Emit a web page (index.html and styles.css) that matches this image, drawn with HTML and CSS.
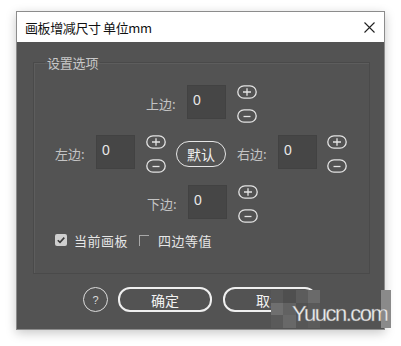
FILE: index.html
```html
<!DOCTYPE html>
<html lang="zh">
<head>
<meta charset="utf-8">
<link rel="stylesheet" href="styles.css">
</head>
<body>
<div class="window">
  <div class="titlebar">
    <span class="title">画板增减尺寸 单位mm</span>
    <svg class="close" width="11" height="11" viewBox="0 0 11 11"><path d="M0.5 0.5L10.5 10.5M10.5 0.5L0.5 10.5" stroke="#222" stroke-width="1.1" fill="none"/></svg>
  </div>
  <div class="content">
    <fieldset class="group">
      <legend class="legend">设置选项</legend>
      <div class="row row-top">
        <div class="cluster">
          <span class="lbl">上边:</span>
          <div class="num">0</div>
          <div class="pm">
            <svg width="20" height="14" viewBox="0 0 20 14"><rect x="0.8" y="0.8" width="18.4" height="12.4" rx="6.2" stroke="#e4e4e4" stroke-width="1.3" fill="none"/><path d="M6 7H14M10 3.2V10.8" stroke="#e4e4e4" stroke-width="1.3"/></svg>
            <svg width="20" height="14" viewBox="0 0 20 14"><rect x="0.8" y="0.8" width="18.4" height="12.4" rx="6.2" stroke="#e4e4e4" stroke-width="1.3" fill="none"/><path d="M6.5 7.5H13.5" stroke="#e4e4e4" stroke-width="1.3"/></svg>
          </div>
        </div>
      </div>
      <div class="row row-mid">
        <div class="cluster">
          <span class="lbl">左边:</span>
          <div class="num">0</div>
          <div class="pm">
            <svg width="20" height="14" viewBox="0 0 20 14"><rect x="0.8" y="0.8" width="18.4" height="12.4" rx="6.2" stroke="#e4e4e4" stroke-width="1.3" fill="none"/><path d="M6 7H14M10 3.2V10.8" stroke="#e4e4e4" stroke-width="1.3"/></svg>
            <svg width="20" height="14" viewBox="0 0 20 14"><rect x="0.8" y="0.8" width="18.4" height="12.4" rx="6.2" stroke="#e4e4e4" stroke-width="1.3" fill="none"/><path d="M6.5 7.5H13.5" stroke="#e4e4e4" stroke-width="1.3"/></svg>
          </div>
        </div>
        <div class="btn-default">默认</div>
        <div class="cluster cluster-right">
          <span class="lbl lbl-right">右边:</span>
          <div class="num">0</div>
          <div class="pm">
            <svg width="20" height="14" viewBox="0 0 20 14"><rect x="0.8" y="0.8" width="18.4" height="12.4" rx="6.2" stroke="#e4e4e4" stroke-width="1.3" fill="none"/><path d="M6 7H14M10 3.2V10.8" stroke="#e4e4e4" stroke-width="1.3"/></svg>
            <svg width="20" height="14" viewBox="0 0 20 14"><rect x="0.8" y="0.8" width="18.4" height="12.4" rx="6.2" stroke="#e4e4e4" stroke-width="1.3" fill="none"/><path d="M6.5 7.5H13.5" stroke="#e4e4e4" stroke-width="1.3"/></svg>
          </div>
        </div>
      </div>
      <div class="row row-bot">
        <div class="cluster">
          <span class="lbl">下边:</span>
          <div class="num">0</div>
          <div class="pm">
            <svg width="20" height="14" viewBox="0 0 20 14"><rect x="0.8" y="0.8" width="18.4" height="12.4" rx="6.2" stroke="#e4e4e4" stroke-width="1.3" fill="none"/><path d="M6 7H14M10 3.2V10.8" stroke="#e4e4e4" stroke-width="1.3"/></svg>
            <svg width="20" height="14" viewBox="0 0 20 14"><rect x="0.8" y="0.8" width="18.4" height="12.4" rx="6.2" stroke="#e4e4e4" stroke-width="1.3" fill="none"/><path d="M6.5 7.5H13.5" stroke="#e4e4e4" stroke-width="1.3"/></svg>
          </div>
        </div>
      </div>
      <div class="checks">
        <span class="cb cb-on"><svg width="12" height="12" viewBox="0 0 12 12"><path d="M2.8 6.2L5 8.4L9.3 3.6" stroke="#3a3a3a" stroke-width="1.6" fill="none"/></svg></span>
        <span class="cb-text">当前画板</span>
        <span class="cb cb-off"></span>
        <span class="cb-text">四边等值</span>
      </div>
    </fieldset>
    <div class="actions">
      <div class="help">?</div>
      <div class="btn">确定</div>
      <div class="btn">取消</div>
    </div>
  </div>
</div>
<div class="mosaic">
  <span class="m m1"></span><span class="m m2"></span><span class="m m3"></span><span class="m m4"></span>
  <span class="m m5"></span><span class="m m6"></span><span class="m m7"></span><span class="m m8"></span>
  <span class="m m9"></span><span class="m m10"></span><span class="m m11"></span><span class="m m12"></span>
</div>
<span class="mosaic-edge"></span>
<span class="watermark">Yuucn.com</span>
</body>
</html>
```

FILE: styles.css
```css
html, body {
  margin: 0;
  padding: 0;
}
body {
  background: #ffffff;
  width: 401px;
  height: 346px;
  overflow: hidden;
  position: relative;
  font-family: "Noto Sans CJK SC", "Noto Sans", sans-serif;
  padding: 11px 0 0 16px;
  box-sizing: border-box;
}
.window {
  width: 369px;
  height: 319px;
  box-sizing: border-box;
  border: 1px solid #8c8c8c;
  box-shadow: 0 3px 10px rgba(0,0,0,0.22);
  display: flex;
  flex-direction: column;
  background: #535353;
}
.titlebar {
  height: 30px;
  flex: none;
  background: #ffffff;
  display: flex;
  align-items: center;
  justify-content: space-between;
  padding: 0 9px 0 8px;
}
.title {
  font-size: 13px;
  color: #111;
  letter-spacing: -0.4px;
}
.close {
  display: block;
}
.content {
  flex: 1;
  background: #535353;
  padding: 11px 14px 0 16px;
}
.group {
  margin: 0;
  padding: 13px 0 24px 0;
  min-width: 0;
  border: 1px solid #4a4a4a;
  box-shadow: inset 1px 1px 0 #5d5d5d;
  display: flex;
  flex-direction: column;
}
.legend {
  margin-left: 11px;
  padding: 0 2px;
  font-size: 13px;
  line-height: 19px;
  color: #c9c9c9;
  letter-spacing: -0.2px;
}
.row {
  display: flex;
  align-items: center;
  height: 34px;
}
.row + .row {
  margin-top: 16px;
}
.row-top { padding-left: 112px; }
.row-mid { padding-left: 21px; }
.row-bot { padding-left: 113px; }
.cluster {
  display: flex;
  align-items: center;
  height: 34px;
}
.lbl {
  width: 41px;
  font-size: 13px;
  color: #c4c4c4;
  padding-top: 2px;
}
.lbl-right {
  width: 41px;
}
.num {
  width: 39px;
  height: 34px;
  box-sizing: border-box;
  background: #464646;
  border: 1px solid #424242;
  color: #e8e8e8;
  font-family: "Liberation Sans", sans-serif;
  font-size: 14px;
  padding: 6px 0 0 5px;
}
.pm {
  margin-left: 11px;
  height: 38px;
  align-self: flex-start;
  display: flex;
  flex-direction: column;
  justify-content: space-between;
}
.pm svg { display: block; }
.btn-default {
  margin-left: 10px;
  width: 50px;
  height: 26px;
  box-sizing: border-box;
  border: 1.5px solid #e6e6e6;
  border-radius: 13px;
  color: #f0f0f0;
  font-size: 14px;
  display: flex;
  align-items: center;
  justify-content: center;
  margin-top: 3px;
}
.cluster-right {
  margin-left: 11px;
}
.cluster-right .pm {
  margin-left: 10px;
}
.checks {
  display: flex;
  align-items: center;
  margin-top: 12px;
  padding-left: 21px;
  height: 18px;
}
.cb {
  display: block;
  box-sizing: border-box;
}
.cb-on {
  width: 12px;
  height: 12px;
  background: #cfcfcf;
  border-radius: 2px;
}
.cb-on svg { display: block; }
.cb-off {
  width: 10px;
  height: 11px;
  border-top: 1px solid #a8a8a8;
  border-left: 1px solid #a8a8a8;
  margin-left: 11px;
}
.cb-text {
  font-size: 13px;
  color: #e6e6e6;
  margin-left: 7px;
  letter-spacing: 0.5px;
}
.cb-off + .cb-text {
  margin-left: 9px;
}
.actions {
  display: flex;
  align-items: center;
  margin-top: 13px;
  padding-left: 50px;
}
.help {
  width: 25px;
  height: 25px;
  box-sizing: border-box;
  border: 1.2px solid #dcdcdc;
  border-radius: 50%;
  color: #dcdcdc;
  font-family: "Liberation Sans", sans-serif;
  font-size: 11px;
  display: flex;
  align-items: center;
  justify-content: center;
}
.btn {
  margin-left: 10px;
  width: 94px;
  height: 25px;
  box-sizing: border-box;
  border: 2px solid #efefef;
  border-radius: 12px;
  color: #f2f2f2;
  font-size: 14px;
  display: flex;
  align-items: center;
  justify-content: center;
}
.btn + .btn {
  margin-left: 11px;
}
.mosaic {
  position: absolute;
  left: 271px;
  top: 290px;
  width: 49px;
  height: 38px;
  display: grid;
  grid-template-columns: repeat(4, 1fr);
  grid-template-rows: repeat(3, 1fr);
}
.m { display: block; }
.m1 { background: #585858; }
.m2 { background: #4f4f4f; }
.m3 { background: #5c5c5c; }
.m4 { background: #6a6a6a; }
.m5 { background: #6f6f6f; }
.m6 { background: #626262; }
.m7 { background: #525252; }
.m8 { background: #595959; }
.m9 { background: #5a5a5a; }
.m10 { background: #686868; }
.m11 { background: #565656; }
.m12 { background: #5b5b5b; }
.mosaic-edge {
  position: absolute;
  left: 381px;
  top: 290px;
  width: 10px;
  height: 38px;
  background: #8a8a8a;
}
.watermark {
  position: absolute;
  left: 292px;
  top: 301px;
  font-family: "Liberation Sans", sans-serif;
  font-size: 22px;
  letter-spacing: -1.5px;
  color: #ececec;
  -webkit-text-stroke: 0.3px #777;
}
```
